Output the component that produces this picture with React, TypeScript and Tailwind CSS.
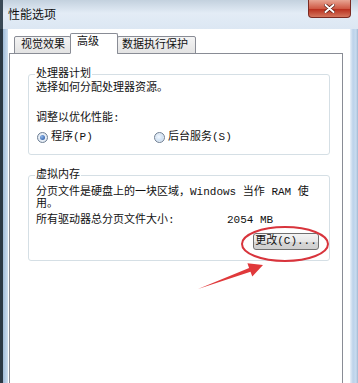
import React from 'react';

const ui = "font-['Liberation_Mono','Noto_Sans_CJK_SC',monospace]";

function Radio({ checked }: { checked?: boolean }) {
    return (
        <span className="w-[11px] h-[11px] rounded-full border border-[#6f7f94] bg-[radial-gradient(circle,#ffffff_0,#dfe8f2_70%)] flex items-center justify-center shrink-0">
            {checked ? (
                <span className="w-[5px] h-[5px] rounded-full bg-[radial-gradient(circle_at_35%_35%,#8fb7ea,#1f4e9c)]" />
            ) : (
                <span className="w-[7px] h-[7px] rounded-full bg-[radial-gradient(circle_at_40%_40%,#f4f9ff,#b9d3ee)]" />
            )}
        </span>
    );
}

export default function App() {
    return (
        <div className={`relative w-[358px] h-[383px] overflow-hidden flex flex-col bg-[#c6d9ee] text-[11px] text-[#111] ${ui}`}>
            {/* title bar */}
            <div className="h-[29px] shrink-0 flex items-start justify-between bg-[linear-gradient(to_bottom,#c3d1de,#e3ecf6_45%,#dce7f3)] border-l-[3px] border-[#3a4a56]">
                <span className="mt-[6px] ml-[5px] text-[12px] leading-[16px] font-['Noto_Sans_CJK_SC',sans-serif]">性能选项</span>
                <button className="w-[43px] h-[18px] mr-[7px] rounded-b-[4px] border border-t-0 border-[#7a2a22] bg-[linear-gradient(to_bottom,#e8a593,#cf5a45_50%,#b9311f_55%,#d4765e)] flex items-center justify-center">
                    <svg width="11" height="9" viewBox="0 0 11 9">
                        <path d="M1.5 1 L9.5 8 M9.5 1 L1.5 8" stroke="#5a1a12" strokeWidth="3.4" strokeLinecap="round" />
                        <path d="M1.5 1 L9.5 8 M9.5 1 L1.5 8" stroke="#ffffff" strokeWidth="2" strokeLinecap="round" />
                    </svg>
                </button>
            </div>

            {/* frame + client */}
            <div className="flex h-[360px] shrink-0">
                <div className="w-[8px] bg-[linear-gradient(to_right,#2a3844_0,#2a3844_3px,#9fbbd8_3px,#cfe0f1_8px)]" />
                <div className="flex-1 bg-white flex flex-col pt-[4px]">
                    {/* tabs */}
                    <div className="flex items-end pl-[6px] -mb-px relative z-10">
                        <div className="h-[18px] w-[57px] border border-[#898c95] rounded-t-[2px] bg-[linear-gradient(to_bottom,#f4f4f4,#e3e3e3)] pl-[6px] leading-[16px]">视觉效果</div>
                        <div className="h-[21px] w-[48px] -ml-px border border-[#898c95] border-b-white rounded-t-[2px] bg-white pl-[6px] leading-[16px]">高级</div>
                        <div className="h-[18px] w-[79px] -ml-px border border-[#898c95] rounded-t-[2px] bg-[linear-gradient(to_bottom,#f4f4f4,#e3e3e3)] pl-[4px] leading-[16px]">数据执行保护</div>
                    </div>

                    {/* tab panel */}
                    <div className="flex-1 ml-[1px] mr-[7px] border border-[#898c95] bg-white pt-[13px] pl-[18px] pr-[12px]">
                        <fieldset className="border border-[#d5dfe5] rounded-[3px] pl-[7px] pb-[10px]">
                            <legend className="ml-[-1px] px-[1px] leading-[14px]">处理器计划</legend>
                            <p className="leading-[14px]">选择如何分配处理器资源。</p>
                            <p className="mt-[16px] leading-[14px]">调整以优化性能:</p>
                            <div className="mt-[5px] flex items-center leading-[14px]">
                                <label className="w-[118px] flex items-center gap-[3px] pl-[1px]">
                                    <Radio checked />
                                    <span>程序(P)</span>
                                </label>
                                <label className="flex items-center gap-[3px]">
                                    <Radio />
                                    <span>后台服务(S)</span>
                                </label>
                            </div>
                        </fieldset>

                        <fieldset className="mt-[13px] border border-[#d5dfe5] rounded-[3px] pl-[7px] pr-[10px] pb-[10px]">
                            <legend className="ml-[-1px] px-[1px] leading-[14px]">虚拟内存</legend>
                            <p className="mt-[4px] leading-[12px] whitespace-nowrap">
                                分页文件是硬盘上的一块区域，Windows 当作 RAM 使<br />用。
                            </p>
                            <div className="mt-[3px] flex leading-[14px]">
                                <span className="w-[191px]">所有驱动器总分页文件大小:</span>
                                <span>2054 MB</span>
                            </div>
                            <div className="mt-[6px] flex justify-end">
                                <button className="w-[66px] h-[17px] rounded-[3px] border border-[#707070] bg-[linear-gradient(to_bottom,#f4f4f4,#e6e6e6_50%,#d6d6d6_51%,#cfcfcf)] text-[11px] leading-[15px] text-[#111]">
                                    更改(C)...
                                </button>
                            </div>
                        </fieldset>
                    </div>
                </div>
                <div className="w-[8px] bg-[linear-gradient(to_right,#e9f0f8_0,#bcd2ea_3px,#c8dbef_6px,#9fb7d1_8px)]" />
            </div>

            {/* red annotation */}
            <svg className="absolute inset-0 pointer-events-none" width="358" height="383" viewBox="0 0 358 383">
                <ellipse cx="285" cy="244" rx="43" ry="17" fill="none" stroke="#d8343c" strokeWidth="2" />
                <polygon
                    points="198,289 249.1,268 247.4,263.3 263,265 252.3,276.5 250.5,271.8"
                    fill="#e0393b"
                />
            </svg>
        </div>
    );
}
